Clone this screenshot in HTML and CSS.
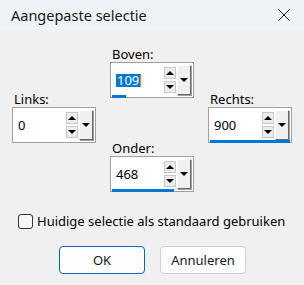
FILE: index.html
```html
<!DOCTYPE html>
<html lang="nl">
<head>
  <meta charset="UTF-8">
  <title>Aangepaste selectie</title>
  <link rel="stylesheet" href="styles.css">
</head>
<body>
  <div class="window">
    <div class="titlebar">
      <span class="title">Aangepaste selectie</span>
      <svg class="close" width="12" height="12" viewBox="0 0 12 12">
        <path d="M0.5 0.5 L11.5 11.5 M11.5 0.5 L0.5 11.5" stroke="#1a1a1a" stroke-width="1" fill="none"/>
      </svg>
    </div>

    <div class="content">
      <div class="fields">
        <div class="col col-left">
          <label>Links:</label>
          <div class="spinbox">
            <div class="main">
              <span class="value">0</span>
              <div class="spins">
                <span class="spin"><i class="up"></i></span>
                <span class="spin"><i class="down"></i></span>
              </div>
              <span class="drop"><i class="down"></i></span>
            </div>
            <div class="track"><div class="fill" style="width: 0%"></div></div>
          </div>
        </div>

        <div class="col col-mid">
          <label>Boven:</label>
          <div class="spinbox">
            <div class="main">
              <span class="value"><span class="selected">109</span><span class="caret"></span></span>
              <div class="spins">
                <span class="spin"><i class="up"></i></span>
                <span class="spin"><i class="down"></i></span>
              </div>
              <span class="drop"><i class="down"></i></span>
            </div>
            <div class="track"><div class="fill" style="width: 17%"></div></div>
          </div>

          <label class="lower">Onder:</label>
          <div class="spinbox">
            <div class="main">
              <span class="value">468</span>
              <div class="spins">
                <span class="spin"><i class="up"></i></span>
                <span class="spin"><i class="down"></i></span>
              </div>
              <span class="drop"><i class="down"></i></span>
            </div>
            <div class="track"><div class="fill" style="width: 77%"></div></div>
          </div>
        </div>

        <div class="col col-right">
          <label>Rechts:</label>
          <div class="spinbox">
            <div class="main">
              <span class="value">900</span>
              <div class="spins">
                <span class="spin"><i class="up"></i></span>
                <span class="spin"><i class="down"></i></span>
              </div>
              <span class="drop"><i class="down"></i></span>
            </div>
            <div class="track"><div class="fill" style="width: 100%"></div></div>
          </div>
        </div>
      </div>

      <div class="check-row">
        <span class="checkbox"></span>
        <span class="check-label">Huidige selectie als standaard gebruiken</span>
      </div>

      <div class="buttons">
        <button class="btn btn-default">OK</button>
        <button class="btn">Annuleren</button>
      </div>
    </div>
  </div>
</body>
</html>
```

FILE: styles.css
```css
body { margin: 0; font-family: "Noto Sans", "Open Sans", sans-serif; color: #000; }
.window { width: 304px; height: 285px; background: #f0f0f0; overflow: hidden; }

.titlebar { height: 30px; background: #eef3f8; display: flex; align-items: center; justify-content: space-between; padding: 0 14px 0 11px; box-sizing: border-box; }
.title { font-size: 14.5px; color: #1a1a1a; }
.close { display: block; }

.content { padding: 16px 0 0 12px; }
.fields { display: flex; gap: 14px; }
.col { width: 84px; display: flex; flex-direction: column; }
.col-left, .col-right { padding-top: 45px; }

label { font-size: 13px; line-height: 16px; padding-left: 2px; }
.lower { margin-top: 42px; }

.spinbox { width: 84px; height: 36px; box-sizing: border-box; border: 1px solid #a0a0a0; background: #fff; display: flex; flex-direction: column; }
.main { flex: 1; display: flex; align-items: center; padding: 2px 2px 0 0; }
.value { flex: 1; font-size: 13px; padding-left: 5px; display: flex; align-items: center; }
.selected { background: #0078d7; color: #fff; padding: 0 1px; line-height: 13px; }
.caret { width: 1px; height: 13px; background: #f08000; }

.spins { display: flex; flex-direction: column; gap: 2px; margin-right: 1px; }
.spin { width: 10px; height: 10px; border: 1px solid #c8c8c8; background: #ececec; display: flex; align-items: center; justify-content: center; }
.drop { width: 14px; height: 30px; box-sizing: border-box; background: #f0f0f0; border: 1px solid; border-color: #fff #696969 #696969 #fff; box-shadow: 1px 1px 0 #a0a0a0; display: flex; align-items: center; justify-content: center; }

i.up, i.down { display: block; width: 0; height: 0; border-left: 4px solid transparent; border-right: 4px solid transparent; }
i.up { border-bottom: 4px solid #000; }
i.down { border-top: 4px solid #000; }

.track { height: 3px; margin: 0 1px; }
.fill { height: 3px; background: #0078d7; }

.check-row { display: flex; align-items: center; gap: 4px; margin-top: 20px; padding-left: 6px; }
.checkbox { width: 13px; height: 13px; border: 1px solid #333; border-radius: 3px; background: #f7f7f7; }
.check-label { font-size: 13px; }

.buttons { display: flex; gap: 15px; margin-top: 16px; padding-left: 47px; }
.btn { width: 86px; height: 28px; font-family: inherit; font-size: 13px; background: #fdfdfd; border: 1px solid #d0d0d0; border-radius: 4px; color: #1a1a1a; padding: 0; }
.btn-default { border-color: #0067c0; }
```
